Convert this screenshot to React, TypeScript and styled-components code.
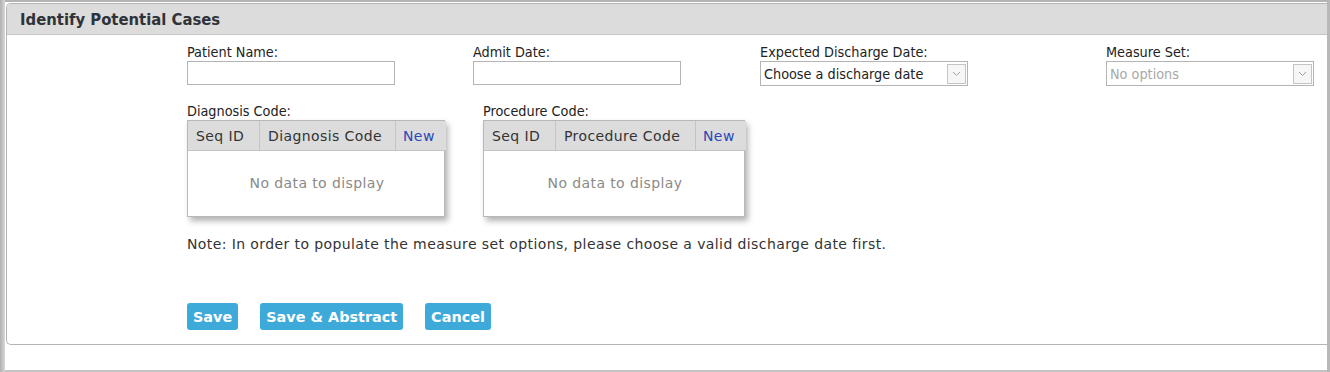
import React from "react";
import styled, { createGlobalStyle } from "styled-components";

const Global = createGlobalStyle`
  html, body { margin: 0; padding: 0; background: #ffffff; }
  body { font-family: "DejaVu Sans", Verdana, sans-serif; color: #333; }
  * { box-sizing: border-box; }
`;

const Frame = styled.div`
  display: flex;
  width: 1330px;
  height: 372px;
  overflow: hidden;
  background: #fff;
`;

const LeftRail = styled.div`
  width: 5px;
  flex: none;
  background: linear-gradient(to right, #b0b0b0, #c8c8c8 60%, #d8d8d8);
`;

const RightRail = styled.div`
  width: 3px;
  flex: none;
  background: #b8b8b8;
`;

const Main = styled.div`
  flex: 1;
  display: flex;
  flex-direction: column;
  border-top: 2px solid #b4b4b4;
  border-bottom: 2px solid #c4c4c4;
  padding-top: 1px;
`;

const Panel = styled.section`
  margin-left: 1px;
  height: 342px;
  border: 1px solid #b4b4b4;
  border-right: none;
  border-radius: 5px 0 0 5px;
  display: flex;
  flex-direction: column;
  overflow: hidden;
`;

const Header = styled.div`
  height: 31px;
  flex: none;
  background: #dcdcdc;
  border-bottom: 1px solid #c6c6c6;
  display: flex;
  align-items: center;
  padding-left: 13px;
  font-family: "DejaVu Sans Condensed", "DejaVu Sans", sans-serif;
  font-weight: bold;
  font-size: 16.5px;
  color: #2f3338;
`;

const Body = styled.div`
  padding: 9px 0 0 180px;
  display: flex;
  flex-direction: column;
`;

const FieldRow = styled.div`
  display: grid;
  grid-template-columns: 286px 287px 346px 208px;
`;

const Field = styled.div`
  display: flex;
  flex-direction: column;
`;

const Label = styled.label`
  font-family: "DejaVu Sans Condensed", "DejaVu Sans", sans-serif;
  font-size: 14.3px;
  line-height: 17px;
  color: #222;
  white-space: nowrap;
`;

const TextInput = styled.div`
  width: 208px;
  height: 24px;
  border: 1px solid #b4b4b4;
  background: #fff;
`;

const Select = styled.div<{ $disabled?: boolean }>`
  width: 208px;
  height: 25px;
  border: 1px solid #b4b4b4;
  background: #fff;
  display: flex;
  align-items: center;
  justify-content: space-between;
  padding: 0 1px 0 3px;
  font-family: "DejaVu Sans Condensed", "DejaVu Sans", sans-serif;
  font-size: 14.3px;
  color: ${(p) => (p.$disabled ? "#a8a8a8" : "#222")};
  white-space: nowrap;
`;

const Arrow = styled.span`
  width: 19px;
  height: 20px;
  border: 1px solid #c4c4c4;
  background: #f6f6f6;
  display: flex;
  align-items: center;
  justify-content: center;
`;

const GridRow = styled.div`
  display: flex;
  margin-top: 17px;
`;

const GridField = styled.div<{ $width: number }>`
  display: flex;
  flex-direction: column;
  width: ${(p) => p.$width}px;
`;

const Grid = styled.div<{ $cols: string }>`
  display: grid;
  grid-template-columns: ${(p) => p.$cols};
  grid-template-rows: 30px 65px;
  border: 1px solid #b8b8b8;
  box-shadow: 3px 4px 6px rgba(0, 0, 0, 0.3);
  background: #fff;
`;

const HeadCell = styled.div<{ $link?: boolean; $last?: boolean }>`
  background: #dcdcdc;
  border-bottom: 1px solid #c4c4c4;
  border-right: ${(p) => (p.$last ? "none" : "1px solid #c4c4c4")};
  display: flex;
  align-items: center;
  padding-left: ${(p) => (p.$link ? 7 : 8)}px;
  font-size: 14px;
  letter-spacing: 0.4px;
  color: ${(p) => (p.$link ? "#2847b8" : "#333")};
  white-space: nowrap;
`;

const Empty = styled.div`
  grid-column: 1 / -1;
  display: flex;
  align-items: center;
  justify-content: center;
  font-size: 14px;
  letter-spacing: 0.4px;
  color: #8a8a8a;
  padding-bottom: 1px;
`;

const Note = styled.p`
  margin: 19px 0 0 0;
  font-size: 14px;
  letter-spacing: 0.4px;
  line-height: 17px;
  color: #333;
  white-space: nowrap;
`;

const Actions = styled.div`
  display: flex;
  gap: 22px;
  margin-top: 50px;
`;

const Button = styled.button`
  height: 27px;
  padding: 0 6px;
  border: none;
  border-radius: 3px;
  background: #3eaad9;
  color: #fff;
  font-family: "DejaVu Sans", Verdana, sans-serif;
  font-weight: bold;
  font-size: 14.4px;
  cursor: pointer;
`;

const Chevron = () => (
  <svg width="9" height="6" viewBox="0 0 9 6">
    <path d="M1 1 L4.5 4.5 L8 1" fill="none" stroke="#a0a0a0" strokeWidth="1" />
  </svg>
);

export default function App() {
  return (
    <>
      <Global />
      <Frame>
        <LeftRail />
        <Main>
          <Panel>
            <Header>Identify Potential Cases</Header>
            <Body>
              <FieldRow>
                <Field>
                  <Label>Patient Name:</Label>
                  <TextInput />
                </Field>
                <Field>
                  <Label>Admit Date:</Label>
                  <TextInput />
                </Field>
                <Field>
                  <Label>Expected Discharge Date:</Label>
                  <Select>
                    <span>Choose a discharge date</span>
                    <Arrow>
                      <Chevron />
                    </Arrow>
                  </Select>
                </Field>
                <Field>
                  <Label>Measure Set:</Label>
                  <Select $disabled>
                    <span>No options</span>
                    <Arrow>
                      <Chevron />
                    </Arrow>
                  </Select>
                </Field>
              </FieldRow>
              <GridRow>
                <GridField $width={296}>
                  <Label>Diagnosis Code:</Label>
                  <Grid $cols="72px 136px 50px" style={{ width: 258 }}>
                    <HeadCell>Seq ID</HeadCell>
                    <HeadCell>Diagnosis Code</HeadCell>
                    <HeadCell $link $last>New</HeadCell>
                    <Empty>No data to display</Empty>
                  </Grid>
                </GridField>
                <GridField $width={262}>
                  <Label>Procedure Code:</Label>
                  <Grid $cols="72px 140px 50px">
                    <HeadCell>Seq ID</HeadCell>
                    <HeadCell>Procedure Code</HeadCell>
                    <HeadCell $link $last>New</HeadCell>
                    <Empty>No data to display</Empty>
                  </Grid>
                </GridField>
              </GridRow>
              <Note>
                Note: In order to populate the measure set options, please choose a valid discharge date first.
              </Note>
              <Actions>
                <Button>Save</Button>
                <Button>Save &amp; Abstract</Button>
                <Button>Cancel</Button>
              </Actions>
            </Body>
          </Panel>
        </Main>
        <RightRail />
      </Frame>
    </>
  );
}
